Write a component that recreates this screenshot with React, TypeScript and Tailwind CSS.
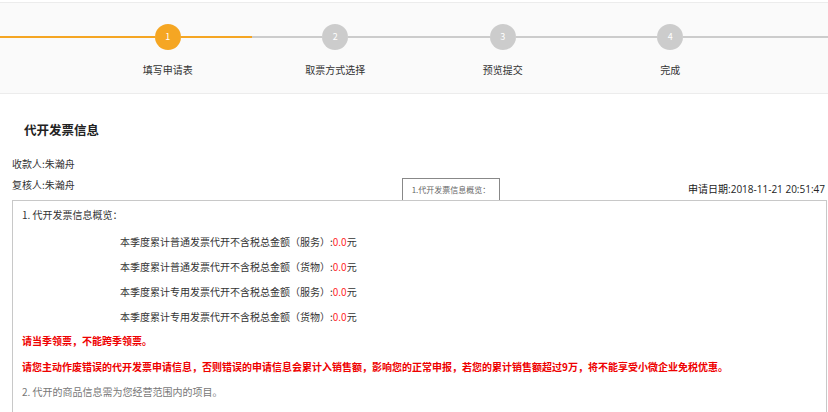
import React from "react";

const steps = ["填写申请表", "取票方式选择", "预览提交", "完成"];

const amounts = [
  "本季度累计普通发票代开不含税总金额（服务）",
  "本季度累计普通发票代开不含税总金额（货物）",
  "本季度累计专用发票代开不含税总金额（服务）",
  "本季度累计专用发票代开不含税总金额（货物）",
];

const font = { fontFamily: '"Noto Sans CJK SC", "Noto Sans", sans-serif' };

export default function App() {
  const current = 0;

  return (
    <div className="w-[828px] h-[412px] overflow-hidden bg-white text-[#333]" style={font}>
      {/* Steps */}
      <div className="mt-[2px] h-[92px] border-t border-b border-[#ececec] bg-[#fafafa] pt-[21px]">
        <div className="flex items-center">
          <div className="h-[2px] w-[84px] bg-[#f5a623]" />
          {steps.map((s, i) => {
            const done = i <= current;
            return (
              <div key={s} className="flex w-[167.5px] items-center">
                <div className={`h-[2px] flex-1 ${done ? "bg-[#f5a623]" : "bg-[#cccccc]"}`} />
                <div
                  className={`flex h-[26px] w-[26px] items-center justify-center rounded-full text-[9px] text-white ${
                    done ? "bg-[#f5a623]" : "bg-[#cccccc]"
                  }`}
                >
                  {i + 1}
                </div>
                <div className={`h-[2px] flex-1 ${done ? "bg-[#f5a623]" : "bg-[#cccccc]"}`} />
              </div>
            );
          })}
          <div className="h-[2px] flex-1 bg-[#cccccc]" />
        </div>
        <div className="mt-[13px] flex pl-[84px]">
          {steps.map((s) => (
            <div key={s} className="w-[167.5px] text-center text-[10px] leading-[14px] text-[#333]">
              {s}
            </div>
          ))}
        </div>
      </div>

      {/* Title */}
      <h2 className="mt-[28px] pl-[24px] text-[12.5px] font-bold leading-[16px] text-[#222]">代开发票信息</h2>

      <div className="mt-[19px] pl-[12px] text-[10px] leading-[14px]">收款人:朱瀚舟</div>
      <div className="mt-[7px] flex items-end pl-[12px] text-[10px] leading-[14px]">
        <span className="w-[390px] pb-[8px]">复核人:朱瀚舟</span>
        <div className="mt-[-8px] flex h-[22px] w-[98px] items-center justify-center border border-b-0 border-[#888] text-[8px] text-[#666]">
          1.代开发票信息概览：
        </div>
        <span
          className="ml-auto pb-[4px] pr-[3px] text-[10px] text-[#222]"
          style={{ fontFamily: '"Open Sans", "Noto Sans CJK SC", sans-serif' }}
        >
          申请日期:2018-11-21 20:51:47
        </span>
      </div>

      {/* Main box */}
      <div className="ml-[12px] mr-[1px] h-[260px] border border-[#c8c8c8] pl-[9px] pt-[7px] text-[10px] leading-[14px]">
        <div>1. 代开发票信息概览：</div>
        <div className="mt-[13px] flex flex-col gap-[11px] pl-[98px]">
          {amounts.map((a) => (
            <div key={a}>
              {a}:<span className="text-[#ff2a2a]">0.0</span>元
            </div>
          ))}
        </div>
        <div className="mt-[10px] font-bold text-[#ee0000]">请当季领票，不能跨季领票。</div>
        <div className="mt-[12px] font-bold text-[#ee0000]">
          请您主动作废错误的代开发票申请信息，否则错误的申请信息会累计入销售额，影响您的正常申报，若您的累计销售额超过9万，将不能享受小微企业免税优惠。
        </div>
        <div className="mt-[11px] text-[#777]">2. 代开的商品信息需为您经营范围内的项目。</div>
      </div>
    </div>
  );
}
